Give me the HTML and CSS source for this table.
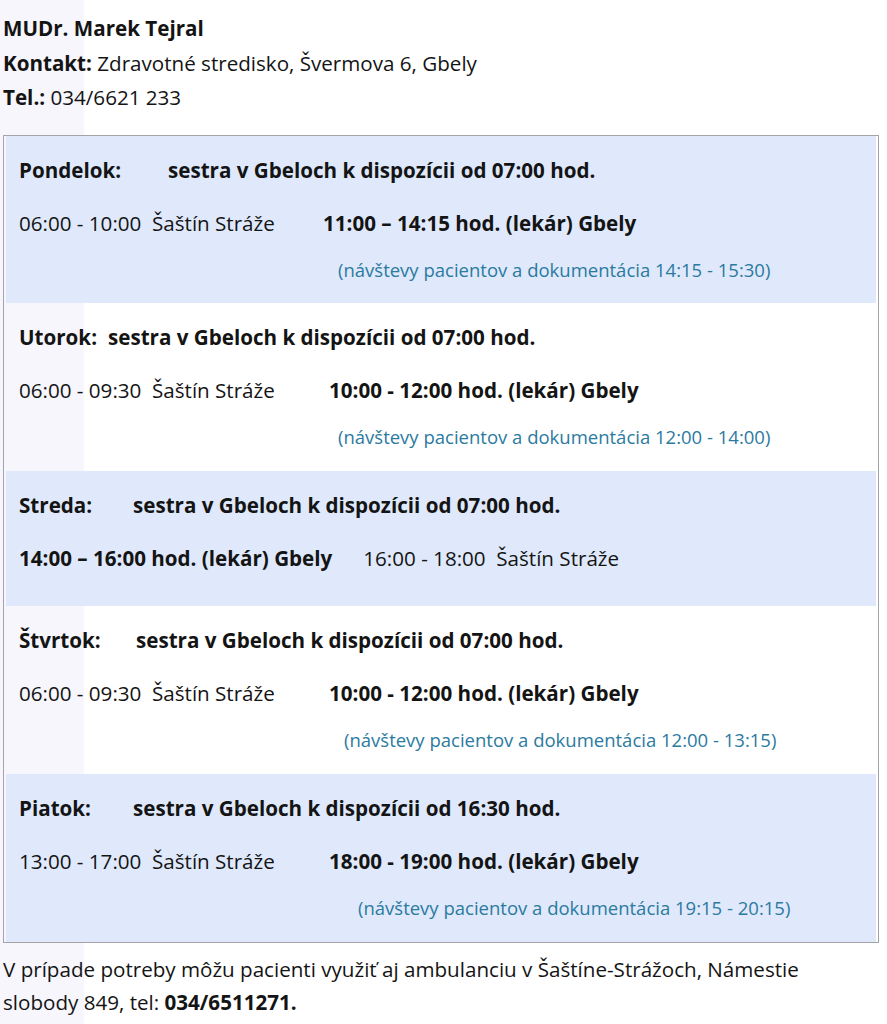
FILE: index.html
```html
<!DOCTYPE html>
<html lang="sk">
<head>
<meta charset="utf-8">
<title>MUDr. Marek Tejral</title>
<link rel="stylesheet" href="styles.css">
</head>
<body>
<div class="page">
  <p class="hdr"><b>MUDr. Marek Tejral</b></p>
  <p class="hdr"><b>Kontakt:</b> Zdravotné stredisko, Švermova 6, Gbely</p>
  <p class="hdr"><b>Tel.:</b> 034/6621 233</p>

  <div class="sched">
    <div class="day blue first">
      <div class="l1"><b class="dn w-pon">Pondelok:</b><b>sestra v Gbeloch k dispozícii od 07:00 hod.</b></div>
      <div class="l2"><span class="t">06:00 - 10:00</span><span class="loc">Šaštín Stráže</span><b class="d-pon">11:00 – 14:15 hod. (lekár) Gbely</b></div>
      <div class="l3 i-pon">(návštevy pacientov a dokumentácia 14:15 - 15:30)</div>
    </div>
    <div class="day">
      <div class="l1"><b class="dn w-uto">Utorok:</b><b>sestra v Gbeloch k dispozícii od 07:00 hod.</b></div>
      <div class="l2"><span class="t">06:00 - 09:30</span><span class="loc">Šaštín Stráže</span><b>10:00 - 12:00 hod. (lekár) Gbely</b></div>
      <div class="l3 i-uto">(návštevy pacientov a dokumentácia 12:00 - 14:00)</div>
    </div>
    <div class="day blue short">
      <div class="l1"><b class="dn w-str">Streda:</b><b>sestra v Gbeloch k dispozícii od 07:00 hod.</b></div>
      <div class="l2"><b class="doc2">14:00 – 16:00 hod. (lekár) Gbely</b><span class="t2">16:00 - 18:00</span><span>Šaštín Stráže</span></div>
    </div>
    <div class="day">
      <div class="l1"><b class="dn w-stv">Štvrtok:</b><b>sestra v Gbeloch k dispozícii od 07:00 hod.</b></div>
      <div class="l2"><span class="t">06:00 - 09:30</span><span class="loc">Šaštín Stráže</span><b>10:00 - 12:00 hod. (lekár) Gbely</b></div>
      <div class="l3 i-stv">(návštevy pacientov a dokumentácia 12:00 - 13:15)</div>
    </div>
    <div class="day blue">
      <div class="l1"><b class="dn w-pia">Piatok:</b><b>sestra v Gbeloch k dispozícii od 16:30 hod.</b></div>
      <div class="l2"><span class="t">13:00 - 17:00</span><span class="loc">Šaštín Stráže</span><b>18:00 - 19:00 hod. (lekár) Gbely</b></div>
      <div class="l3 i-pia">(návštevy pacientov a dokumentácia 19:15 - 20:15)</div>
    </div>
  </div>

  <p class="foot">V prípade potreby môžu pacienti využiť aj ambulanciu v Šaštíne-Strážoch, Námestie slobody 849, tel: <b>034/6511271.</b></p>
</div>
</body>
</html>
```

FILE: styles.css
```css
html, body {
  margin: 0;
  padding: 0;
}
body {
  background: linear-gradient(to right, #f6f6fc 0, #f6f6fc 84px, #ffffff 84px);
  font-family: "Open Sans", "Noto Sans", sans-serif;
  font-size: 20.6px;
  color: #141414;
  min-height: 1024px;
}
.page {
  width: 876px;
  padding: 11px 0 0 3px;
}
.hdr {
  margin: 0;
  line-height: 34.5px;
}
b { font-weight: 700; }

.sched {
  margin-top: 20px;
  border: 1px solid #a3a3a8;
  padding: 0 2px;
  display: flex;
  flex-direction: column;
}
.day {
  padding: 17px 13px 0;
  height: 168px;
  box-sizing: border-box;
}
.day.first { height: 167px; }
.day.short { height: 135px; }
.blue { background: #dfe9fb; }

.l1, .l2, .l3 {
  display: flex;
  align-items: baseline;
  white-space: nowrap;
  line-height: 34px;
}
.l2 { margin-top: 19px; }
.l3 {
  margin-top: 13px;
  font-size: 18.5px;
  color: #2b7aa0;
}

.dn { flex: none; }
.w-pon { width: 149px; }
.w-uto { width: 89px; }
.w-str { width: 114px; }
.w-stv { width: 117px; }
.w-pia { width: 114px; }

.t { width: 133px; flex: none; }
.loc { width: 177px; flex: none; }
.d-pon { margin-left: -6px; }

.doc2 { flex: none; }
.t2 { margin-left: 31px; width: 133px; flex: none; }

.i-pon { padding-left: 319px; }
.i-uto { padding-left: 319px; }
.i-stv { padding-left: 325px; }
.i-pia { padding-left: 339px; }

.foot {
  margin: 10px 0 0;
  line-height: 33px;
}
```
